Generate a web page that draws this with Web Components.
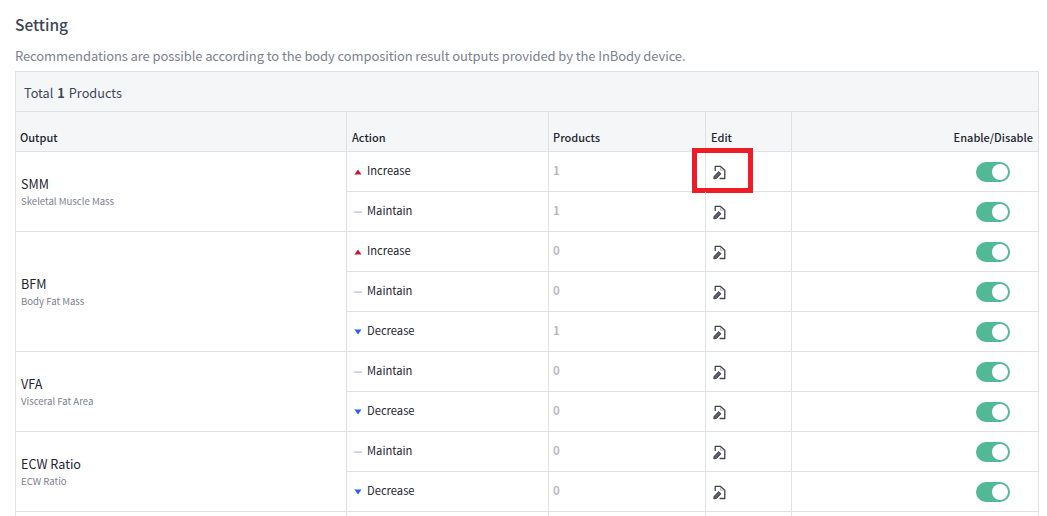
<!DOCTYPE html>
<html lang="en">
<head>
<meta charset="utf-8">
<title>Setting</title>
<style>
  html, body { height: 100%; overflow: hidden; }
  body { margin: 0; background: #fff; font-family: "Noto Sans CJK KR", "Noto Sans", sans-serif; }
</style>
</head>
<body>
<setting-page>
  <output-group name="SMM" desc="Skeletal Muscle Mass">
    <action-row kind="increase" count="1" marked></action-row>
    <action-row kind="maintain" count="1"></action-row>
  </output-group>
  <output-group name="BFM" desc="Body Fat Mass">
    <action-row kind="increase" count="0"></action-row>
    <action-row kind="maintain" count="0"></action-row>
    <action-row kind="decrease" count="1"></action-row>
  </output-group>
  <output-group name="VFA" desc="Visceral Fat Area">
    <action-row kind="maintain" count="0"></action-row>
    <action-row kind="decrease" count="0"></action-row>
  </output-group>
  <output-group name="ECW Ratio" desc="ECW Ratio">
    <action-row kind="maintain" count="0"></action-row>
    <action-row kind="decrease" count="0"></action-row>
  </output-group>
  <output-group name="" desc="">
    <action-row kind="" count=""></action-row>
  </output-group>
</setting-page>

<script>
class settingPage extends HTMLElement {
    constructor() {
        super();
        this.attachShadow({ mode: "open" });
    }
    connectedCallback() {
        this.shadowRoot.innerHTML = `
        <style>
            :host {
                display: block;
                box-sizing: border-box;
                height: 100vh;
                overflow: hidden;
                padding: 12px 8px 0 15px;
                --line: #dfe1e6;
                --cols: 330px 202px 157px 86px 1fr;
            }
            h1 {
                margin: 0;
                font-size: 15.5px;
                line-height: 24px;
                font-weight: 500;
                color: #3d4656;
            }
            p {
                margin: 9px 0 0;
                font-size: 13px;
                letter-spacing: -0.1px;
                line-height: 22px;
                color: #7b8190;
            }
            .table {
                margin-top: 4px;
                border: 1px solid var(--line);
                border-bottom: 0;
            }
            .total {
                display: flex;
                align-items: center;
                padding: 2px 0 0 8px;
                box-sizing: border-box;
                background: #f5f6f8;
                font-size: 12.7px;
                color: #3d4656;
                border-bottom: 1px solid var(--line);
                height: 40px;
            }
            .total b { font-weight: 700; margin: 0 4px; }
            .head {
                display: grid;
                grid-template-columns: var(--cols);
                height: 39px;
                background: #f5f6f8;
                border-bottom: 1px solid var(--line);
                font-size: 11px;
                font-weight: 500;
                color: #1e2533;
            }
            .head div {
                display: flex;
                align-items: flex-end;
                padding: 0 0 6px 4px;
                border-left: 1px solid var(--line);
            }
            .head div:first-child { border-left: 0; }
            .head div:nth-child(2), .head div:nth-child(4) { padding-left: 5px; }
            .head div:last-child { justify-content: flex-end; padding-right: 5px; }
        </style>
        <h1>Setting</h1>
        <p>Recommendations are possible according to the body composition result outputs provided by the InBody device.</p>
        <div class="table">
            <div class="total"><span>Total<b>1</b>Products</span></div>
            <div class="head">
                <div>Output</div>
                <div>Action</div>
                <div>Products</div>
                <div>Edit</div>
                <div>Enable/Disable</div>
            </div>
            <slot></slot>
        </div>
        `;
    }
}

class outputGroup extends HTMLElement {
    constructor() {
        super();
        this.attachShadow({ mode: "open" });
    }
    connectedCallback() {
        const name = this.getAttribute("name");
        const desc = this.getAttribute("desc");
        this.shadowRoot.innerHTML = `
        <style>
            :host {
                display: grid;
                grid-template-columns: 330px 1fr;
            }
            .name {
                display: flex;
                flex-direction: column;
                justify-content: center;
                padding: 0 0 2px 5px;
                border-bottom: 1px solid #dfe1e6;
            }
            strong {
                font-size: 12.6px;
                line-height: 20px;
                font-weight: 400;
                color: #1e2533;
            }
            small {
                font-size: 9.6px;
                line-height: 14px;
                color: #7b8190;
            }
        </style>
        <div class="name">
            <strong>${name}</strong>
            <small>${desc}</small>
        </div>
        <div class="rows"><slot></slot></div>
        `;
    }
}

class actionRow extends HTMLElement {
    constructor() {
        super();
        this.attachShadow({ mode: "open" });
    }
    getMark(kind) {
        if (kind === "increase") {
            return `<svg width="8" height="6" viewBox="0 0 8 6"><path d="M4 .5 7.5 5.5H.5z" fill="#c8143c"/></svg>`;
        }
        if (kind === "decrease") {
            return `<svg width="8" height="6" viewBox="0 0 8 6"><path d="M.5 .5h7L4 5.5z" fill="#2563eb"/></svg>`;
        }
        if (kind === "maintain") {
            return `<svg width="8" height="6" viewBox="0 0 8 6"><path d="M0 2.5h8v1.2H0z" fill="#b9bcc4"/></svg>`;
        }
        return "";
    }
    connectedCallback() {
        const kind = this.getAttribute("kind");
        const count = this.getAttribute("count");
        const label = kind ? kind[0].toUpperCase() + kind.slice(1) : "";
        this.shadowRoot.innerHTML = `
        <style>
            :host {
                display: grid;
                grid-template-columns: 202px 157px 86px 1fr;
                height: 39px;
                border-bottom: 1px solid #dfe1e6;
            }
            .cell {
                display: flex;
                align-items: center;
                border-left: 1px solid #dfe1e6;
                padding: 0 0 2px 4px;
                position: relative;
            }
            .action { gap: 5px; padding: 0 0 3px 7px; font-size: 11.2px; color: #1e2533; }
            .action svg { margin-top: 3px; }
            .count { font-size: 11.5px; font-weight: 700; color: #b9bcc4; padding-bottom: 3px; }
            .edit { padding: 1px 0 0 7px; }
            .state { justify-content: flex-end; padding: 0 28px 0 0; }
            .mark {
                position: absolute;
                left: -14px;
                top: -4px;
                width: 51px;
                height: 35px;
                border: 5px solid #ee1c25;
            }
        </style>
        <div class="cell action">${this.getMark(kind)}<span>${label}</span></div>
        <div class="cell count">${count}</div>
        <div class="cell edit">
            ${kind ? "<edit-icon></edit-icon>" : ""}
            ${this.hasAttribute("marked") ? '<div class="mark"></div>' : ""}
        </div>
        <div class="cell state">${kind ? "<toggle-switch></toggle-switch>" : ""}</div>
        `;
    }
}

class editIcon extends HTMLElement {
    constructor() {
        super();
        this.attachShadow({ mode: "open" });
    }
    connectedCallback() {
        this.shadowRoot.innerHTML = `
        <style>
            :host { display: block; width: 13px; height: 15px; }
            svg { display: block; }
        </style>
        <svg width="13" height="15" viewBox="0 0 13 15" fill="none" stroke="#3f444e" stroke-linejoin="round">
            <path d="M2.2 6V1.4H7.6L11.8 5.2V13.5H6.6" stroke-width="1.3"/>
            <path d="M7.4 1.6V5.2H11.6" stroke-width=".7" stroke="#8d9098"/>
            <path d="M.8 13.8 1.2 11.2 5.8 6.6 8 8.8 3.4 13.4Z" fill="#5c6069" stroke-width="1"/>
        </svg>
        `;
    }
}

class toggleSwitch extends HTMLElement {
    constructor() {
        super();
        this.attachShadow({ mode: "open" });
    }
    connectedCallback() {
        this.shadowRoot.innerHTML = `
        <style>
            :host {
                display: flex;
                justify-content: flex-end;
                align-items: center;
                box-sizing: border-box;
                width: 34px;
                height: 20px;
                padding-right: 2px;
                border-radius: 10px;
                background: #52b996;
            }
            i {
                display: block;
                width: 16px;
                height: 16px;
                border-radius: 50%;
                background: #fff;
            }
        </style>
        <i></i>
        `;
    }
}

customElements.define("setting-page", settingPage);
customElements.define("output-group", outputGroup);
customElements.define("action-row", actionRow);
customElements.define("edit-icon", editIcon);
customElements.define("toggle-switch", toggleSwitch);
</script>
</body>
</html>
